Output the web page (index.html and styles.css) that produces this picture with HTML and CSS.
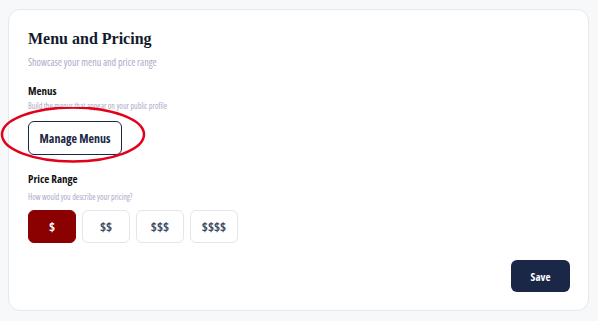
FILE: index.html
```html
<!doctype html>
<html lang="en">
  <head>
    <meta charset="utf-8" />
    <meta name="viewport" content="width=device-width, initial-scale=1.0" />
    <title>Menu and Pricing</title>
    <link rel="stylesheet" href="styles.css">
  </head>

  <body>
    <div class="card">
      <h2 class="card_title">Menu and Pricing</h2>
      <div class="card_subtitle">Showcase your menu and price range</div>

      <div class="section menus_section">
        <div class="section_label">Menus</div>
        <div class="section_hint">Build the menus that appear on your public profile</div>
        <div class="menus_row">
          <div class="outline_btn">Manage Menus</div>
          <!-- 강조 표시 -->
          <svg class="highlight" width="150" height="62" viewBox="0 0 150 62">
            <ellipse cx="73" cy="27.5" rx="71" ry="27" fill="none" stroke="#e3001b" stroke-width="2.5" />
          </svg>
        </div>
      </div>

      <div class="section price_section">
        <div class="section_label">Price Range</div>
        <div class="section_hint">How would you describe your pricing?</div>
        <div class="price_row">
          <div class="price_btn active">$</div>
          <div class="price_btn">$$</div>
          <div class="price_btn">$$$</div>
          <div class="price_btn">$$$$</div>
        </div>
      </div>

      <div class="card_footer">
        <div class="save_btn">Save</div>
      </div>
    </div>
  </body>
</html>
```

FILE: styles.css
```css
body {
  margin: 0;
  padding: 9px 9px 10px 8px;
  background-color: #f7f8fa;
  font-family: "Open Sans", "DejaVu Sans Condensed", sans-serif;
  font-stretch: 75%;
}

.card {
  display: flex;
  flex-direction: column;
  height: 302px;
  box-sizing: border-box;
  padding: 19px 18px 18px 19px;
  background-color: #fff;
  border: 1px solid #e6e8ec;
  border-radius: 12px;
}

.card_title {
  margin: 0;
  font-family: "Liberation Serif", serif;
  font-size: 16px;
  line-height: 20px;
  font-weight: bold;
  color: #131a2c;
}

.card_subtitle {
  margin-top: 6px;
  font-size: 10px;
  line-height: 14px;
  color: #a9aac6;
}

.menus_section {
  margin-top: 15px;
}

.price_section {
  margin-top: 17px;
}

.section_label {
  font-size: 11px;
  line-height: 14px;
  font-weight: bold;
  color: #111;
}

.section_hint {
  margin-top: 2px;
  font-size: 8px;
  line-height: 11px;
  color: #a9aac6;
}

.price_section .section_hint {
  margin-top: 5px;
}

.menus_row {
  position: relative;
  margin-top: 10px;
}

.outline_btn {
  width: 94px;
  height: 34px;
  box-sizing: border-box;
  display: flex;
  justify-content: center;
  align-items: center;
  border: 1px solid #1b2744;
  border-radius: 6px;
  font-size: 12px;
  font-weight: bold;
  color: #1b2744;
}

.highlight {
  position: absolute;
  left: -28px;
  top: -14px;
  pointer-events: none;
}

.price_row {
  display: flex;
  gap: 6px;
  margin-top: 8px;
}

.price_btn {
  width: 48px;
  height: 33px;
  box-sizing: border-box;
  display: flex;
  justify-content: center;
  align-items: center;
  border: 1px solid #e3e5ea;
  border-radius: 6px;
  font-size: 13px;
  font-weight: bold;
  color: #3b4b62;
}

.price_btn.active {
  background-color: #8b0000;
  border-color: #8b0000;
  color: #fff;
}

.card_footer {
  margin-top: auto;
  display: flex;
  justify-content: flex-end;
}

.save_btn {
  width: 59px;
  height: 32px;
  display: flex;
  justify-content: center;
  align-items: center;
  background-color: #1b2746;
  border-radius: 6px;
  font-size: 11px;
  font-weight: bold;
  color: #fff;
}
```
